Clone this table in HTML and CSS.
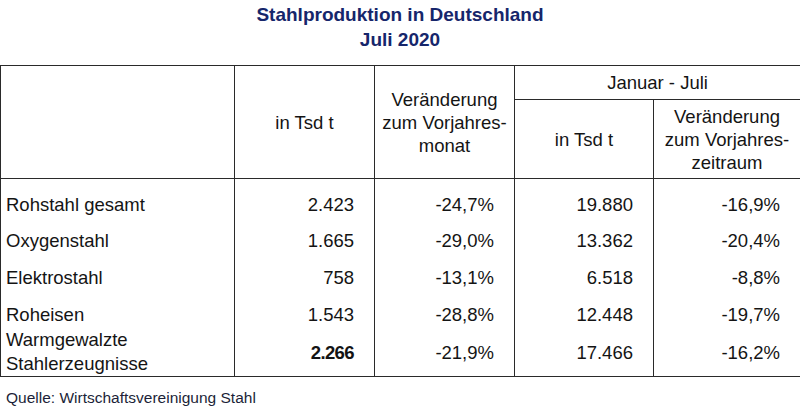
FILE: index.html
```html
<!DOCTYPE html>
<html lang="de">
<head>
<meta charset="utf-8">
<title>Stahlproduktion in Deutschland</title>
<link rel="stylesheet" href="styles.css">
</head>
<body>
<h1 class="title">Stahlproduktion in Deutschland<br>Juli 2020</h1>
<table class="steel">
  <colgroup>
    <col class="c-label">
    <col class="c-num">
    <col class="c-num">
    <col class="c-num2">
    <col class="c-last">
  </colgroup>
  <thead>
    <tr class="hrow1">
      <th rowspan="2"></th>
      <th rowspan="2">in Tsd t</th>
      <th rowspan="2">Veränderung<br>zum Vorjahres-<br>monat</th>
      <th colspan="2" class="period">Januar - Juli</th>
    </tr>
    <tr class="hrow2">
      <th>in Tsd t</th>
      <th>Veränderung<br>zum Vorjahres-<br>zeitraum</th>
    </tr>
  </thead>
  <tbody>
    <tr class="r1">
      <td class="label">Rohstahl gesamt</td>
      <td>2.423</td><td>-24,7%</td><td>19.880</td><td>-16,9%</td>
    </tr>
    <tr class="r2">
      <td class="label">Oxygenstahl</td>
      <td>1.665</td><td>-29,0%</td><td>13.362</td><td>-20,4%</td>
    </tr>
    <tr class="r3">
      <td class="label">Elektrostahl</td>
      <td>758</td><td>-13,1%</td><td>6.518</td><td>-8,8%</td>
    </tr>
    <tr class="r4">
      <td class="label">Roheisen</td>
      <td>1.543</td><td>-28,8%</td><td>12.448</td><td>-19,7%</td>
    </tr>
    <tr class="r5">
      <td class="label two-line">Warmgewalzte<br>Stahlerzeugnisse</td>
      <td class="mid strong">2.266</td><td class="mid">-21,9%</td><td class="mid">17.466</td><td class="mid">-16,2%</td>
    </tr>
  </tbody>
</table>
<p class="source">Quelle: Wirtschaftsvereinigung Stahl</p>
</body>
</html>
```

FILE: styles.css
```css
html, body {
  margin: 0;
  padding: 0;
  background: #ffffff;
}

body {
  font-family: "Liberation Sans", Arial, sans-serif;
  color: #141414;
  width: 800px;
}

.title {
  margin: 0 0 13px 0;
  padding-top: 2px;
  font-size: 19px;
  line-height: 25px;
  font-weight: bold;
  color: #16266b;
  text-align: center;
}

.steel {
  width: 800px;
  border-collapse: collapse;
  table-layout: fixed;
  font-size: 18.5px;
  border: 1px solid #2a2a2a;
}

.c-label { width: 234px; }
.c-num { width: 140px; }
.c-num2 { width: 139px; }
.c-last { width: 147px; }

.steel th {
  font-weight: normal;
  text-align: center;
  vertical-align: middle;
  line-height: 23px;
  padding: 0;
  border: 1px solid #2a2a2a;
}

.hrow1 { height: 34px; }
.hrow2 { height: 79px; }

.steel td {
  padding: 0 20px 0 0;
  text-align: right;
  vertical-align: bottom;
  line-height: 21px;
  border-left: 1px solid #2a2a2a;
  border-right: 1px solid #2a2a2a;
}

.steel td.label {
  text-align: left;
  padding: 0 0 0 5px;
}

.r1 { height: 36px; }
.r2 { height: 36px; }
.r3 { height: 37px; }
.r4 { height: 37px; }
.r5 { height: 52px; }

.steel td.two-line {
  line-height: 24px;
  padding-bottom: 0;
}

.steel td.mid {
  vertical-align: middle;
  padding-top: 4px;
}

.steel td.strong {
  font-weight: bold;
  letter-spacing: -0.6px;
}

.source {
  margin: 11px 0 0 0;
  padding-left: 6px;
  font-size: 15.5px;
  line-height: 20px;
  color: #1c1f38;
}
```
